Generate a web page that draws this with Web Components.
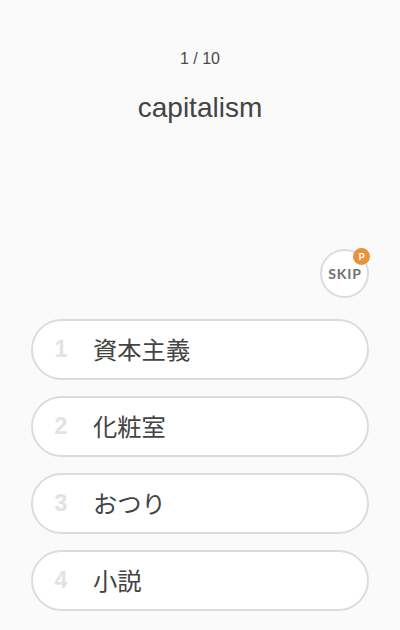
<!DOCTYPE html>
<html lang="ja">
<head>
<meta charset="utf-8">
<style>
  html, body { margin: 0; height: 100%; background: #fafafa; overflow: hidden; }
</style>
</head>
<body>
<quiz-screen>
  <span slot="progress">1 / 10</span>
  <span slot="word">capitalism</span>
  <answer-option num="1">資本主義</answer-option>
  <answer-option num="2">化粧室</answer-option>
  <answer-option num="3">おつり</answer-option>
  <answer-option num="4">小説</answer-option>
</quiz-screen>

<script>
const quizTemplate = document.createElement('template');
quizTemplate.innerHTML = `
  <style>
    :host {
      display: flex;
      flex-direction: column;
      height: 630px;
      box-sizing: border-box;
      padding: 49px 31px 0;
      font-family: "Liberation Sans", "Noto Sans CJK JP", sans-serif;
      color: #444;
    }
    .progress {
      text-align: center;
      font-size: 16px;
      line-height: 20px;
      color: #4a4a4a;
    }
    .word {
      text-align: center;
      font-size: 28px;
      line-height: 32px;
      margin-top: 23px;
      color: #444;
    }
    .skip-row {
      display: flex;
      justify-content: flex-end;
      margin-top: 125px;
    }
    .options {
      display: flex;
      flex-direction: column;
      gap: 16px;
      margin-top: 21px;
    }
  </style>
  <div class="progress"><slot name="progress"></slot></div>
  <div class="word"><slot name="word"></slot></div>
  <div class="skip-row"><skip-button></skip-button></div>
  <div class="options"><slot></slot></div>
`;

class QuizScreen extends HTMLElement {
  constructor() {
    super();
    this.attachShadow({ mode: 'open' });
    this.shadowRoot.appendChild(quizTemplate.content.cloneNode(true));
  }
}

const skipTemplate = document.createElement('template');
skipTemplate.innerHTML = `
  <style>
    :host {
      display: flex;
      position: relative;
      align-items: center;
      justify-content: center;
      width: 49px;
      height: 49px;
      box-sizing: border-box;
      padding-left: 1px;
      border: 2px solid #dcdcdc;
      border-radius: 50%;
      background: #fff;
      font-family: Lato, "Liberation Sans", sans-serif;
      font-size: 14px;
      font-weight: 700;
      letter-spacing: 0.8px;
      color: #6f6f6f;
    }
    .points {
      position: absolute;
      top: -3px;
      right: -3px;
      width: 17px;
      height: 17px;
      border-radius: 50%;
      background: #e8923a;
      color: #fff;
      font-size: 10px;
      line-height: 17px;
      text-align: center;
      letter-spacing: 0;
    }
  </style>
  <span>SKIP</span>
  <span class="points">P</span>
`;

class SkipButton extends HTMLElement {
  constructor() {
    super();
    this.attachShadow({ mode: 'open' });
    this.shadowRoot.appendChild(skipTemplate.content.cloneNode(true));
  }
}

const optionTemplate = document.createElement('template');
optionTemplate.innerHTML = `
  <style>
    :host {
      display: flex;
      align-items: center;
      height: 61px;
      box-sizing: border-box;
      border: 2px solid #dcdcdc;
      border-radius: 31px;
      background: #fff;
      font-family: "Noto Sans CJK JP", sans-serif;
      font-size: 24.3px;
      color: #444;
    }
    .num {
      width: 56px;
      margin-right: 4px;
      text-align: center;
      font-family: "Liberation Sans", sans-serif;
      font-size: 23px;
      font-weight: 700;
      color: #e2e2e2;
    }
    .label {
      margin-bottom: 3px;
    }
  </style>
  <span class="num"></span>
  <span class="label"><slot></slot></span>
`;

class AnswerOption extends HTMLElement {
  constructor() {
    super();
    this.attachShadow({ mode: 'open' });
    this.shadowRoot.appendChild(optionTemplate.content.cloneNode(true));
    this.shadowRoot.querySelector('.num').textContent = this.getAttribute('num');
  }
}

customElements.define('quiz-screen', QuizScreen);
customElements.define('skip-button', SkipButton);
customElements.define('answer-option', AnswerOption);
</script>
</body>
</html>
